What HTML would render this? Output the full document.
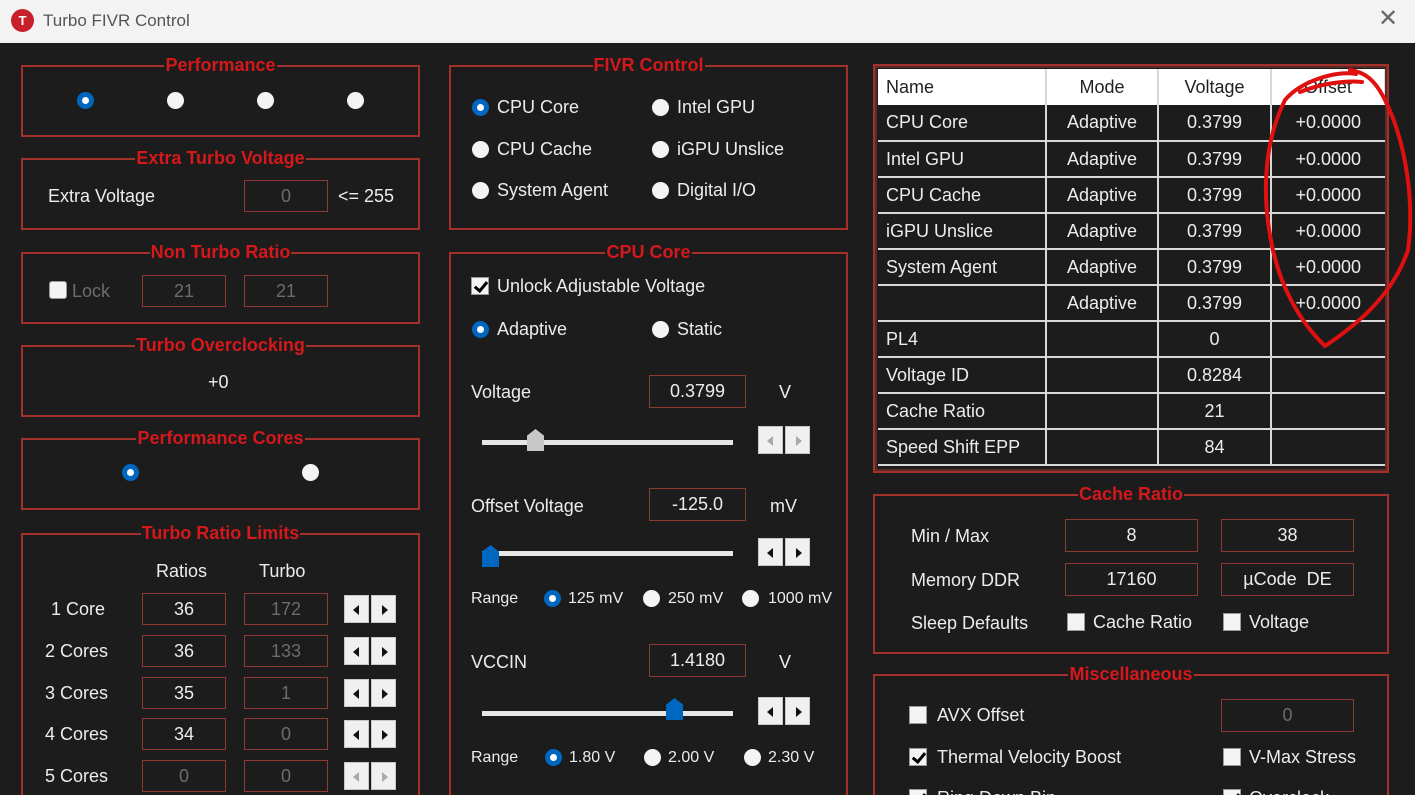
<!DOCTYPE html>
<html><head><meta charset="utf-8"><style>
*{margin:0;padding:0;box-sizing:border-box}
html{width:1415px;height:795px;overflow:hidden}
body{width:1415px;height:795px;background:#1c1c1c;font-family:"Liberation Sans",sans-serif;color:#ececec;position:relative;overflow:hidden;font-size:18px}
.a{position:absolute}
.tb{left:0;top:0;width:1415px;height:43px;background:#f3f3f3}
.g{position:absolute;border:2px solid #a4302b}
.gl{position:absolute;top:-13px;left:0;right:0;text-align:center;line-height:22px}
.gl span{background:#1c1c1c;color:#d4181b;font-weight:bold;font-size:18px;padding:0 1px}
.t{position:absolute;height:22px;line-height:22px;white-space:nowrap}
.in{position:absolute;border:1px solid #8e3a32;background:#1c1c1c;text-align:center;color:#ececec;font-size:18px}
.dis{color:#6c6c6c}
.r{position:absolute;width:17px;height:17px;border-radius:50%;background:#f4f4f4}
.rs{background:#0067c0}
.rs::after{content:"";position:absolute;left:5px;top:5px;width:7px;height:7px;border-radius:50%;background:#fff}
.cb{position:absolute;width:18px;height:18px;background:#f4f4f4;border:1px solid #999}
.ck::after{content:"";position:absolute;left:5px;top:1px;width:5px;height:10px;border:solid #000;border-width:0 3px 3px 0;transform:rotate(40deg)}
.sp{position:absolute;width:52px;height:28px}
.sp div{position:absolute;top:0;width:25px;height:28px;background:#f0f0f0;border:1px solid #c8c8c8}
.sp div:first-child{left:0}.sp div:last-child{left:27px}
.sp i{position:absolute;top:9px;width:0;height:0;border-top:5px solid transparent;border-bottom:5px solid transparent}
.sp .l i{left:8px;border-right:6px solid #111}
.sp .rr i{left:10px;border-left:6px solid #111}
.sp.d .l i{border-right-color:#aaa}.sp.d .rr i{border-left-color:#aaa}
.trk{position:absolute;height:5px;background:#e6e6e6}
.th{position:absolute;width:17px;height:22px;background:#0067c0;clip-path:polygon(0 30%,50% 0,100% 30%,100% 100%,0 100%)}
table{border-collapse:collapse;position:absolute;left:878px;top:69px;width:507px;font-size:18px}
td{height:36px;border:2px solid #d8d8d8;border-top:none;text-align:center;color:#ececec;padding:0}
td:first-child{text-align:left;padding-left:8px;border-left:none}
td:last-child{border-right:none}
tr.h td{background:#fff;color:#222;border-bottom:none;border-right:1px solid #ddd}
</style></head><body>
<div class="a tb"></div>
<div class="a" style="left:11px;top:9px;width:23px;height:23px;border-radius:50%;background:#c8202a;color:#fff;font-size:13px;font-weight:bold;text-align:center;line-height:23px">T</div>
<div class="t" style="left:43px;top:10px;color:#555;font-size:17px">Turbo FIVR Control</div>
<div class="t" style="left:1378px;top:8px;color:#666;font-size:24px">✕</div>

<div class="g" style="left:21px;top:65px;width:399px;height:72px"><div class="gl"><span>Performance</span></div></div>
<div class="r rs" style="left:77px;top:92px"></div><div class="r" style="left:167px;top:92px"></div><div class="r" style="left:257px;top:92px"></div><div class="r" style="left:347px;top:92px"></div>

<div class="g" style="left:21px;top:158px;width:399px;height:72px"><div class="gl"><span>Extra Turbo Voltage</span></div></div>
<div class="t" style="left:48px;top:185px">Extra Voltage</div>
<div class="in dis" style="left:244px;top:180px;width:84px;height:32px;line-height:30px">0</div>
<div class="t" style="left:338px;top:185px">&lt;= 255</div>

<div class="g" style="left:21px;top:252px;width:399px;height:72px"><div class="gl"><span>Non Turbo Ratio</span></div></div>
<div class="cb" style="left:49px;top:281px;border-radius:3px"></div>
<div class="t dis" style="left:72px;top:280px">Lock</div>
<div class="in dis" style="left:142px;top:275px;width:84px;height:32px;line-height:30px">21</div>
<div class="in dis" style="left:244px;top:275px;width:84px;height:32px;line-height:30px">21</div>

<div class="g" style="left:21px;top:345px;width:399px;height:72px"><div class="gl"><span>Turbo Overclocking</span></div></div>
<div class="t" style="left:208px;top:371px">+0</div>

<div class="g" style="left:21px;top:438px;width:399px;height:72px"><div class="gl"><span>Performance Cores</span></div></div>
<div class="r rs" style="left:122px;top:464px"></div><div class="r" style="left:302px;top:464px"></div>

<div class="g" style="left:21px;top:533px;width:399px;height:280px"><div class="gl"><span>Turbo Ratio Limits</span></div></div>
<div class="t" style="left:156px;top:560px">Ratios</div>
<div class="t" style="left:259px;top:560px">Turbo</div>
<div class="t" style="left:51px;top:598px">1 Core</div>
<div class="t" style="left:45px;top:640px">2 Cores</div>
<div class="t" style="left:45px;top:682px">3 Cores</div>
<div class="t" style="left:45px;top:723px">4 Cores</div>
<div class="t" style="left:45px;top:765px">5 Cores</div>
<div class="in" style="left:142px;top:593px;width:84px;height:32px;line-height:30px">36</div>
<div class="in dis" style="left:244px;top:593px;width:84px;height:32px;line-height:30px">172</div>
<div class="in" style="left:142px;top:635px;width:84px;height:32px;line-height:30px">36</div>
<div class="in dis" style="left:244px;top:635px;width:84px;height:32px;line-height:30px">133</div>
<div class="in" style="left:142px;top:677px;width:84px;height:32px;line-height:30px">35</div>
<div class="in dis" style="left:244px;top:677px;width:84px;height:32px;line-height:30px">1</div>
<div class="in" style="left:142px;top:718px;width:84px;height:32px;line-height:30px">34</div>
<div class="in dis" style="left:244px;top:718px;width:84px;height:32px;line-height:30px">0</div>
<div class="in dis" style="left:142px;top:760px;width:84px;height:32px;line-height:30px">0</div>
<div class="in dis" style="left:244px;top:760px;width:84px;height:32px;line-height:30px">0</div>
<div class="sp" style="left:344px;top:595px"><div class="l"><i></i></div><div class="rr"><i></i></div></div>
<div class="sp" style="left:344px;top:637px"><div class="l"><i></i></div><div class="rr"><i></i></div></div>
<div class="sp" style="left:344px;top:679px"><div class="l"><i></i></div><div class="rr"><i></i></div></div>
<div class="sp" style="left:344px;top:720px"><div class="l"><i></i></div><div class="rr"><i></i></div></div>
<div class="sp d" style="left:344px;top:762px"><div class="l"><i></i></div><div class="rr"><i></i></div></div>

<div class="g" style="left:449px;top:65px;width:399px;height:165px"><div class="gl"><span>FIVR Control</span></div></div>
<div class="r rs" style="left:472px;top:99px"></div><div class="t" style="left:497px;top:96px">CPU Core</div>
<div class="r" style="left:652px;top:99px"></div><div class="t" style="left:677px;top:96px">Intel GPU</div>
<div class="r" style="left:472px;top:141px"></div><div class="t" style="left:497px;top:138px">CPU Cache</div>
<div class="r" style="left:652px;top:141px"></div><div class="t" style="left:677px;top:138px">iGPU Unslice</div>
<div class="r" style="left:472px;top:182px"></div><div class="t" style="left:497px;top:179px">System Agent</div>
<div class="r" style="left:652px;top:182px"></div><div class="t" style="left:677px;top:179px">Digital I/O</div>

<div class="g" style="left:449px;top:252px;width:399px;height:560px"><div class="gl"><span>CPU Core</span></div></div>
<div class="cb ck" style="left:471px;top:277px"></div><div class="t" style="left:497px;top:275px">Unlock Adjustable Voltage</div>
<div class="r rs" style="left:472px;top:321px"></div><div class="t" style="left:497px;top:318px">Adaptive</div>
<div class="r" style="left:652px;top:321px"></div><div class="t" style="left:677px;top:318px">Static</div>

<div class="t" style="left:471px;top:381px">Voltage</div>
<div class="in" style="left:649px;top:375px;width:97px;height:33px;line-height:31px">0.3799</div>
<div class="t" style="left:779px;top:381px">V</div>
<div class="trk" style="left:482px;top:440px;width:251px"></div>
<div class="th" style="left:527px;top:429px;background:#c8c8c8"></div>
<div class="sp d" style="left:758px;top:426px"><div class="l"><i></i></div><div class="rr"><i></i></div></div>

<div class="t" style="left:471px;top:495px">Offset Voltage</div>
<div class="in" style="left:649px;top:488px;width:97px;height:33px;line-height:31px">-125.0</div>
<div class="t" style="left:770px;top:495px">mV</div>
<div class="trk" style="left:482px;top:551px;width:251px"></div>
<div class="th" style="left:482px;top:545px"></div>
<div class="sp" style="left:758px;top:538px"><div class="l"><i></i></div><div class="rr"><i></i></div></div>

<div class="t" style="left:471px;top:588px;font-size:16px">Range</div>
<div class="r rs" style="left:544px;top:590px"></div><div class="t" style="left:568px;top:588px;font-size:16px">125 mV</div>
<div class="r" style="left:643px;top:590px"></div><div class="t" style="left:668px;top:588px;font-size:16px">250 mV</div>
<div class="r" style="left:742px;top:590px"></div><div class="t" style="left:768px;top:588px;font-size:16px">1000 mV</div>

<div class="t" style="left:471px;top:651px">VCCIN</div>
<div class="in" style="left:649px;top:644px;width:97px;height:33px;line-height:31px">1.4180</div>
<div class="t" style="left:779px;top:651px">V</div>
<div class="trk" style="left:482px;top:711px;width:251px"></div>
<div class="th" style="left:666px;top:698px"></div>
<div class="sp" style="left:758px;top:697px"><div class="l"><i></i></div><div class="rr"><i></i></div></div>

<div class="t" style="left:471px;top:747px;font-size:16px">Range</div>
<div class="r rs" style="left:545px;top:749px"></div><div class="t" style="left:569px;top:747px;font-size:16px">1.80 V</div>
<div class="r" style="left:644px;top:749px"></div><div class="t" style="left:668px;top:747px;font-size:16px">2.00 V</div>
<div class="r" style="left:744px;top:749px"></div><div class="t" style="left:768px;top:747px;font-size:16px">2.30 V</div>

<div class="a" style="left:873px;top:64px;width:516px;height:409px;border:2px solid #a4302b;box-shadow:inset 0 0 0 2px #5a2a28"></div>
<table>
<tr class="h"><td style="width:168px">Name</td><td style="width:112px">Mode</td><td style="width:113px">Voltage</td><td>Offset</td></tr>
<tr><td>CPU Core</td><td>Adaptive</td><td>0.3799</td><td>+0.0000</td></tr>
<tr><td>Intel GPU</td><td>Adaptive</td><td>0.3799</td><td>+0.0000</td></tr>
<tr><td>CPU Cache</td><td>Adaptive</td><td>0.3799</td><td>+0.0000</td></tr>
<tr><td>iGPU Unslice</td><td>Adaptive</td><td>0.3799</td><td>+0.0000</td></tr>
<tr><td>System Agent</td><td>Adaptive</td><td>0.3799</td><td>+0.0000</td></tr>
<tr><td></td><td>Adaptive</td><td>0.3799</td><td>+0.0000</td></tr>
<tr><td>PL4</td><td></td><td>0</td><td></td></tr>
<tr><td>Voltage ID</td><td></td><td>0.8284</td><td></td></tr>
<tr><td>Cache Ratio</td><td></td><td>21</td><td></td></tr>
<tr><td>Speed Shift EPP</td><td></td><td>84</td><td></td></tr>
</table>

<div class="g" style="left:873px;top:494px;width:516px;height:160px"><div class="gl"><span>Cache Ratio</span></div></div>
<div class="t" style="left:911px;top:525px">Min / Max</div>
<div class="in" style="left:1065px;top:519px;width:133px;height:33px;line-height:31px">8</div>
<div class="in" style="left:1221px;top:519px;width:133px;height:33px;line-height:31px">38</div>
<div class="t" style="left:911px;top:569px">Memory DDR</div>
<div class="in" style="left:1065px;top:563px;width:133px;height:33px;line-height:31px">17160</div>
<div class="in" style="left:1221px;top:563px;width:133px;height:33px;line-height:31px">µCode&nbsp; DE</div>
<div class="t" style="left:911px;top:612px">Sleep Defaults</div>
<div class="cb" style="left:1067px;top:613px"></div><div class="t" style="left:1093px;top:611px">Cache Ratio</div>
<div class="cb" style="left:1223px;top:613px"></div><div class="t" style="left:1249px;top:611px">Voltage</div>

<div class="g" style="left:873px;top:674px;width:516px;height:140px"><div class="gl"><span>Miscellaneous</span></div></div>
<div class="cb" style="left:909px;top:706px"></div><div class="t" style="left:937px;top:704px">AVX Offset</div>
<div class="in dis" style="left:1221px;top:699px;width:133px;height:33px;line-height:31px">0</div>
<div class="cb ck" style="left:909px;top:748px"></div><div class="t" style="left:937px;top:746px">Thermal Velocity Boost</div>
<div class="cb" style="left:1223px;top:748px"></div><div class="t" style="left:1249px;top:746px">V-Max Stress</div>
<div class="cb ck" style="left:909px;top:789px"></div><div class="t" style="left:937px;top:787px">Ring Down Bin</div>
<div class="cb ck" style="left:1223px;top:789px"></div><div class="t" style="left:1249px;top:787px">Overclock</div>

<svg class="a" style="left:0;top:0" width="1415" height="795">
<path d="M1356 74 C1335 70 1300 82 1285 100 C1265 140 1262 190 1270 235 C1278 285 1300 322 1325 346 C1352 328 1392 298 1408 250 C1415 200 1405 140 1385 100 C1375 80 1365 72 1350 70 M1300 92 C1320 84 1345 80 1362 82" fill="none" stroke="#e01010" stroke-width="4" stroke-linecap="round"/>
</svg>
</body></html>
